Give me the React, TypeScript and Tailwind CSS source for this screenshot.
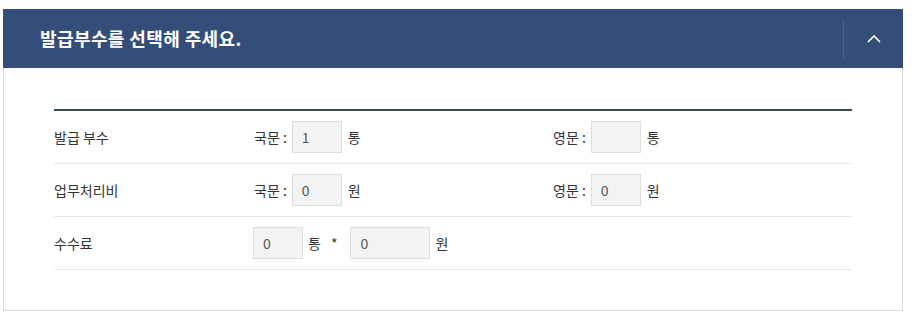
import React from "react";

const font = { fontFamily: '"Noto Sans CJK KR", "Noto Sans", sans-serif' };

function Box({ value, w = "w-[50px]" }: { value: string; w?: string }) {
  return (
    <div
      className={`${w} h-[32px] bg-[#f3f3f3] border border-[#dcdcdc] flex items-center pl-[9px] text-[14px] text-[#555]`}
    >
      {value}
    </div>
  );
}

function Row({ label, children }: { label: string; children: React.ReactNode }) {
  return (
    <div className="flex items-center py-[10px] border-b border-[#e8e8e8]">
      <div className="w-[200px] text-[14px] text-[#333]">{label}</div>
      {children}
    </div>
  );
}

export default function App() {
  return (
    <div className="bg-white w-[915px] h-[316px] pt-[9px] pl-[3px]" style={font}>
      <div className="w-[900px]">
        <div className="h-[59px] bg-[#344e79] flex items-center justify-between">
          <div className="pl-[37px] text-white text-[18px] font-bold tracking-[0.4px]">
            발급부수를 선택해 주세요.
          </div>
          <div className="flex items-center h-full">
            <div className="w-px h-[40px] bg-[#4a6290]" />
            <div className="w-[59px] flex items-center justify-center">
              <svg width="16" height="10" viewBox="0 0 16 10">
                <path d="M2 8 L8 2 L14 8" fill="none" stroke="white" strokeWidth="1.7" />
              </svg>
            </div>
          </div>
        </div>
        <div className="border border-t-0 border-[#dcdcdc] px-[50px] pt-[41px] pb-[40px]">
          <div className="border-t-2 border-[#3d4b5f]">
            <Row label="발급 부수">
              <div className="w-[299px] flex items-center text-[14px] text-[#333]">
                <span className="mr-[5px]">국문 :</span>
                <Box value="1" />
                <span className="ml-[6px]">통</span>
              </div>
              <div className="flex items-center text-[14px] text-[#333]">
                <span className="mr-[5px]">영문 :</span>
                <Box value="" />
                <span className="ml-[6px]">통</span>
              </div>
            </Row>
            <Row label="업무처리비">
              <div className="w-[299px] flex items-center text-[14px] text-[#333]">
                <span className="mr-[5px]">국문 :</span>
                <Box value="0" />
                <span className="ml-[6px]">원</span>
              </div>
              <div className="flex items-center text-[14px] text-[#333]">
                <span className="mr-[5px]">영문 :</span>
                <Box value="0" />
                <span className="ml-[6px]">원</span>
              </div>
            </Row>
            <Row label="수수료">
              <div className="flex items-center text-[14px] text-[#333] -ml-px">
                <Box value="0" />
                <span className="ml-[5px]">통</span>
                <span className="ml-[10px] mr-[13px]">*</span>
                <Box value="0" w="w-[80px]" />
                <span className="ml-[5px]">원</span>
              </div>
            </Row>
          </div>
        </div>
      </div>
    </div>
  );
}
